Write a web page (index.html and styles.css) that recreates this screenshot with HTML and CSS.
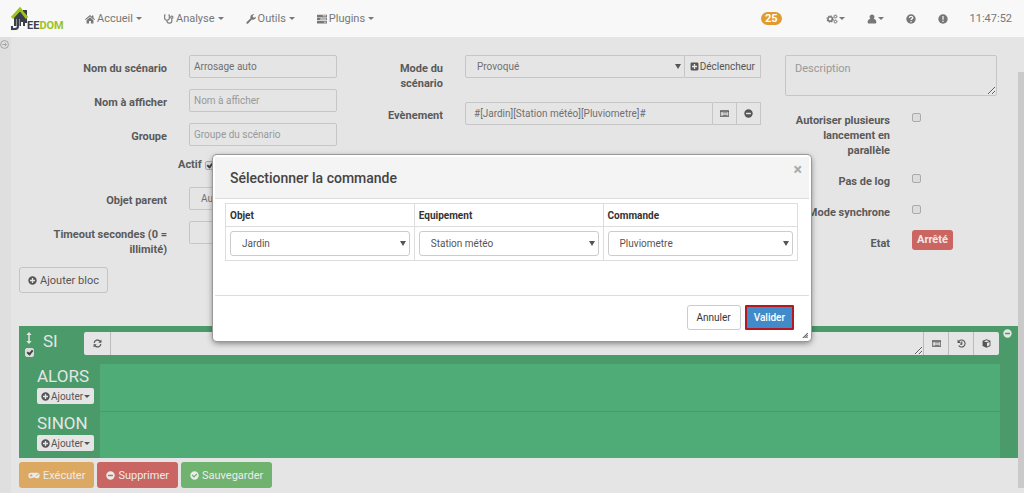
FILE: index.html
```html
<!DOCTYPE html>
<html lang="fr">
<head>
<meta charset="utf-8">
<title>Jeedom - Scénario</title>
<link rel="stylesheet" href="styles.css">
</head>
<body>
<svg class="sprite" aria-hidden="true">
  <symbol id="home" viewBox="0 0 16 16"><path d="M8 1.5 0 8.4l1.2 1.3L8 4l6.800 5.700L16 8.400l-2.500-2.200V2.200h-2.300v2zM8 5.200 2.500 9.800V15h4v-4h3v4h4V9.800z"/></symbol>
  <symbol id="steth" viewBox="0 0 16 16"><path d="M2.500 1.500H1V6c0 2.500 1.500 4 3.700 4S8.500 8.500 8.500 6V1.500H7M4.800 10v1.500c0 4 7.700 4 7.700 0V7" fill="none" stroke="currentColor" stroke-width="1.800"/><circle cx="12.500" cy="5" r="1.800" fill="none" stroke="currentColor" stroke-width="1.800"/></symbol>
  <symbol id="wrench" viewBox="0 0 16 16"><path d="M15.600 4.200 13 5.800 10.800 4.600V2.200L13.300.7C10.500-.6 7 1.500 7 5c0 .6.1 1.200.3 1.700L.8 13.200c-1 1.200 1 3.200 2.200 2.200l6.400-6.500c3.500 1.300 7-1.500 6.200-4.700z"/></symbol>
  <symbol id="tasks" viewBox="0 0 16 16"><path fill-rule="evenodd" d="M0 1h16v4H0zm9 1.300v1.400h5.700V2.300zM0 6h16v4H0zm5 1.300v1.400h9.700V7.300zM0 11h16v4H0zm11 1.300v1.400h3.700v-1.400z"/></symbol>
  <symbol id="gears" viewBox="0 0 18 16"><g fill="none" stroke="currentColor"><circle cx="6" cy="8" r="3.500" stroke-width="2.400"/><circle cx="6" cy="8" r="5" stroke-width="1.800" stroke-dasharray="2 1.930"/><circle cx="14.500" cy="4" r="1.900" stroke-width="1.500"/><circle cx="14.500" cy="4" r="2.900" stroke-width="1" stroke-dasharray="1.200 1.080"/><circle cx="14.500" cy="12" r="1.900" stroke-width="1.500"/><circle cx="14.500" cy="12" r="2.900" stroke-width="1" stroke-dasharray="1.200 1.080"/></g></symbol>
  <symbol id="user" viewBox="0 0 16 16"><path d="M8 0.800a3.800 3.800 0 0 1 2.600 6.700C13.500 8 15 10.500 15 13c0 1.300-.8 2.200-2 2.200H3c-1.200 0-2-.9-2-2.200 0-2.500 1.500-5 4.400-5.500A3.800 3.800 0 0 1 8 .8z"/></symbol>
  <symbol id="question" viewBox="0 0 16 16"><circle cx="8" cy="8" r="7.500"/><path class="cut" d="M5.300 6.200c.3-3.400 5.500-3.200 5.500-.3 0 1.900-2.700 1.900-2.700 3.800M8.100 11v2"/></symbol>
  <symbol id="exclaim" viewBox="0 0 16 16"><circle cx="8" cy="8" r="7.500"/><path class="cut" d="M8 3v6.200M8 10.700v2.200"/></symbol>
  <symbol id="plus-circle" viewBox="0 0 16 16"><path fill-rule="evenodd" d="M8 .5a7.500 7.500 0 1 0 0 15 7.500 7.500 0 0 0 0-15zM6.800 3.500h2.400v3.300h3.300v2.400H9.200v3.300H6.800V9.200H3.500V6.800h3.300z"/></symbol>
  <symbol id="plus-square" viewBox="0 0 16 16"><path fill-rule="evenodd" d="M3 1h10a2 2 0 0 1 2 2v10a2 2 0 0 1-2 2H3a2 2 0 0 1-2-2V3a2 2 0 0 1 2-2zm3.800 2.500v3.300H3.500v2.400h3.300v3.300h2.400V9.200h3.300V6.800H9.200V3.500z"/></symbol>
  <symbol id="minus-circle" viewBox="0 0 16 16"><path fill-rule="evenodd" d="M8 .5a7.500 7.500 0 1 0 0 15 7.500 7.500 0 0 0 0-15zM3.700 6.700h8.600v2.600H3.700z"/></symbol>
  <symbol id="check-circle" viewBox="0 0 16 16"><path fill-rule="evenodd" d="M8 .5a7.500 7.500 0 1 0 0 15 7.500 7.500 0 0 0 0-15zM7 12 3 8l1.600-1.600L7 8.800l4.400-4.400L13 6z"/></symbol>
  <symbol id="list" viewBox="0 0 16 16"><path fill-rule="evenodd" d="M1 2h14a1 1 0 0 1 1 1v10a1 1 0 0 1-1 1H1a1 1 0 0 1-1-1V3a1 1 0 0 1 1-1zm.2 2.800v8h13.600v-8zM2.500 6h1.200v1.200H2.500zm2.300 0h8.700v1.200H4.800zM2.500 8.300h1.200v1.200H2.500zm2.300 0h8.700v1.200H4.800zm-2.300 2.300h1.200v1.200H2.500zm2.300 0h8.700v1.200H4.800z"/></symbol>
  <symbol id="refresh" viewBox="0 0 16 16"><path d="M2 7a6 6 0 0 1 10.500-3M14 9a6 6 0 0 1-10.500 3" fill="none" stroke="currentColor" stroke-width="2.200"/><path d="M15 1v5.500H9.500zM1 15V9.500h5.500z"/></symbol>
  <symbol id="history" viewBox="0 0 16 16"><path d="M3.500 4a6.200 6.200 0 1 1-.5 7.500M8.500 4.500V9H5.500" fill="none" stroke="currentColor" stroke-width="2"/><path d="M1 1v6h6z"/></symbol>
  <symbol id="cube" viewBox="0 0 16 16"><path fill-rule="evenodd" d="M8 .5 15 3.300v9L8 15.500l-7-3.200v-9zm0 1.600L3.300 4 8 5.900 12.700 4zM8.800 7.300v6.200l4.700-2.200v-6z"/></symbol>
  <symbol id="gamepad" viewBox="0 0 20 16"><path fill-rule="evenodd" d="M5 3h10a5 5 0 0 1 0 10c-1.600 0-2.600-.7-3.400-1.500H8.400C7.600 12.300 6.600 13 5 13A5 5 0 0 1 5 3zm-.8 2.500v1.700H2.500v1.600h1.700v1.700h1.600V8.800h1.700V7.200H5.800V5.500zM13 7.500v2h2v-2zm2.500-2v2h2v-2z"/></symbol>
  <symbol id="updown" viewBox="0 0 8 16"><path d="M4 0l3.500 4H5v8h2.500L4 16 .5 12H3V4H.5z"/></symbol>
  <symbol id="arrow-circle" viewBox="0 0 16 16"><g fill="none" stroke="currentColor" stroke-width="1.500"><circle cx="8" cy="8" r="7"/><path d="M4 8h7M8.500 5l3 3-3 3"/></g></symbol>
  <symbol id="grip" viewBox="0 0 8 8"><path d="M1 8 8 1M3.500 8 8 3.500M6 8l2-2" fill="none" stroke="currentColor" stroke-width="1.300"/></symbol>
</svg>

<header class="navbar">
  <a class="brand" href="#" aria-label="Jeedom">
    <svg width="56" height="26" viewBox="0 0 56 26">
      <path d="M4 11 10 5l3 3V5l4-1v13h-2v3H4z" fill="#3b3d4a"/>
      <path d="M2 12 10 3l7 9" fill="none" stroke="#9cc31c" stroke-width="3"/>
      <path d="M13 4h4v5l-4-4z" fill="#3b3d4a"/>
      <path d="M8 13v7q0 3-3 3H2v-3" fill="none" stroke="#e8e8ea" stroke-width="3"/>
      <path d="M8 13v7q0 3-3 3H2v-3M8 10v2" fill="none" stroke="#3b3d4a" stroke-width="2"/>
      <path d="M11 16h2v4h-2z" fill="#f8f8f8"/>
      <text class="brand-text" x="17" y="23">EE<tspan fill="#9cc31c">DOM</tspan></text>
    </svg>
  </a>
  <nav class="menu">
    <a href="#"><svg class="icon"><use href="#home"/></svg>Accueil<i class="caret"></i></a>
    <a href="#"><svg class="icon"><use href="#steth"/></svg>Analyse<i class="caret"></i></a>
    <a href="#"><svg class="icon"><use href="#wrench"/></svg>Outils<i class="caret"></i></a>
    <a href="#"><svg class="icon"><use href="#tasks"/></svg>Plugins<i class="caret"></i></a>
  </nav>
  <a class="count" href="#">25</a>
  <nav class="tools">
    <a href="#" aria-label="Configuration"><svg class="icon wide"><use href="#gears"/></svg><i class="caret"></i></a>
    <a href="#" aria-label="Utilisateur"><svg class="icon"><use href="#user"/></svg><i class="caret"></i></a>
    <a href="#" aria-label="Aide"><svg class="icon"><use href="#question"/></svg></a>
    <a href="#" aria-label="Alertes"><svg class="icon"><use href="#exclaim"/></svg></a>
    <time>11:47:52</time>
  </nav>
</header>

<div class="page">
  <aside class="strip"><svg class="icon"><use href="#arrow-circle"/></svg></aside>
  <main class="content">
    <form class="form">
      <div class="col col-a">
        <div class="row"><label for="name">Nom du scénario</label><input class="field" id="name" type="text" value="Arrosage auto"></div>
        <div class="row"><label for="display">Nom à afficher</label><input class="field" id="display" type="text" placeholder="Nom à afficher"></div>
        <div class="row"><label for="group">Groupe</label><input class="field" id="group" type="text" placeholder="Groupe du scénario"></div>
        <div class="active"><label for="active">Actif</label><input class="check" id="active" type="checkbox" checked></div>
        <div class="row"><label for="parent">Objet parent</label><span class="pick"><select class="field" id="parent"><option>Aucun</option></select></span></div>
        <div class="row"><label for="timeout">Timeout secondes (0 = illimité)</label><input class="field" id="timeout" type="text"></div>
      </div>
      <div class="col col-b">
        <div class="row"><label for="mode">Mode du scénario</label>
          <div class="group"><span class="pick"><select class="field" id="mode"><option>Provoqué</option></select></span><button class="addon text" type="button"><svg class="icon"><use href="#plus-square"/></svg>Déclencheur</button></div>
        </div>
        <div class="row"><label for="event">Evènement</label>
          <div class="group"><input class="field" id="event" type="text" value="#[Jardin][Station météo][Pluviometre]#"><button class="addon" type="button" aria-label="Choisir"><svg class="icon"><use href="#list"/></svg></button><button class="addon" type="button" aria-label="Retirer"><svg class="icon"><use href="#minus-circle"/></svg></button></div>
        </div>
      </div>
      <div class="col col-c">
        <textarea class="field description" placeholder="Description" aria-label="Description"></textarea>
        <div class="row"><label for="multi">Autoriser plusieurs lancement en parallèle</label><input class="check" id="multi" type="checkbox"></div>
        <div class="row"><label for="nolog">Pas de log</label><input class="check" id="nolog" type="checkbox"></div>
        <div class="row"><label for="sync">Mode synchrone</label><input class="check" id="sync" type="checkbox"></div>
        <div class="row"><span class="label">Etat</span><span class="state">Arrêté</span></div>
      </div>
    </form>

    <button class="btn outline" type="button"><svg class="icon"><use href="#plus-circle"/></svg>Ajouter bloc</button>

    <section class="block">
      <div class="block-head">
        <div class="handle"><svg class="move"><use href="#updown"/></svg><input class="check" type="checkbox" checked aria-label="Activer le bloc"></div>
        <h2>SI</h2>
        <div class="group expr">
          <button class="addon" type="button" aria-label="Rafraîchir"><svg class="icon"><use href="#refresh"/></svg></button><textarea class="field" rows="1" aria-label="Condition"></textarea><button class="addon" type="button" aria-label="Commande"><svg class="icon"><use href="#list"/></svg></button><button class="addon" type="button" aria-label="Historique"><svg class="icon"><use href="#history"/></svg></button><button class="addon" type="button" aria-label="Equipement"><svg class="icon"><use href="#cube"/></svg></button>
        </div>
        <button class="remove" type="button" aria-label="Supprimer le bloc"><svg class="icon"><use href="#minus-circle"/></svg></button>
      </div>
      <div class="branch"><div class="branch-name"><h2>ALORS</h2><button class="mini" type="button"><svg class="icon"><use href="#plus-circle"/></svg>Ajouter<i class="caret"></i></button></div><div class="zone"></div></div>
      <div class="branch"><div class="branch-name"><h2>SINON</h2><button class="mini" type="button"><svg class="icon"><use href="#plus-circle"/></svg>Ajouter<i class="caret"></i></button></div><div class="zone"></div></div>
    </section>

    <div class="actions">
      <button class="btn run" type="button"><svg class="icon wide"><use href="#gamepad"/></svg>Exécuter</button>
      <button class="btn delete" type="button"><svg class="icon"><use href="#minus-circle"/></svg>Supprimer</button>
      <button class="btn save" type="button"><svg class="icon"><use href="#check-circle"/></svg>Sauvegarder</button>
    </div>
  </main>
  <div class="scroll"></div>
</div>

<div class="overlay">
  <div class="dialog" role="dialog" aria-labelledby="title">
    <div class="dialog-head"><h1 id="title">Sélectionner la commande</h1><button class="close" type="button" aria-label="Fermer">×</button></div>
    <div class="dialog-body">
      <table class="table">
        <thead><tr><th id="h1">Objet</th><th id="h2">Equipement</th><th id="h3" class="last">Commande</th></tr></thead>
        <tbody><tr>
          <td><span class="pick"><select class="field" aria-labelledby="h1"><option>Jardin</option></select></span></td>
          <td><span class="pick"><select class="field" aria-labelledby="h2"><option>Station météo</option></select></span></td>
          <td><span class="pick"><select class="field" aria-labelledby="h3"><option>Pluviometre</option></select></span></td>
        </tr></tbody>
      </table>
    </div>
    <div class="dialog-foot"><button class="btn cancel" type="button">Annuler</button><button class="btn confirm" type="button">Valider</button></div>
    <svg class="grip"><use href="#grip"/></svg>
  </div>
</div>
</body>
</html>
```
FILE: styles.css
```css
*, *::after { box-sizing: border-box; }
body { margin: 0; min-height: 100vh; display: flex; flex-direction: column; background: #e5e5e5; color: #555; font: 10px/15px Roboto, sans-serif; }
button, input, select, textarea { font: inherit; color: inherit; margin: 0; }
button { display: inline-flex; align-items: center; justify-content: center; gap: 3px; cursor: pointer; white-space: nowrap; }
h1, h2 { margin: 0; }
a { color: inherit; text-decoration: none; }
.sprite { position: absolute; width: 0; height: 0; }
.icon { width: 9px; height: 9px; flex: none; fill: currentColor; }
.icon.wide { width: 12px; }
.cut { fill: none; stroke: #f8f8f8; stroke-width: 2; }
.caret { border: 3px solid transparent; border-top-color: currentColor; border-bottom: 0; margin-left: 1px; }

.navbar { display: flex; align-items: center; height: 37px; padding: 0 12px 0 10px; background: #f8f8f8; color: #777; font-size: 11px; }
.navbar a { display: flex; align-items: center; gap: 3px; }
.navbar .icon { width: 10px; height: 10px; }
.navbar .icon.wide { width: 12px; }
.brand-text { font: bold 11px Roboto, sans-serif; fill: #3b3d4a; }
.menu { display: flex; gap: 22px; margin-left: 19px; flex: 1; }
.menu a { gap: 2px; }
.navbar .count { padding: 0 4px; height: 13px; border-radius: 7px; background: #e39a2c; color: #fff; font-weight: 700; margin-right: 44px; }
.tools { display: flex; align-items: center; gap: 22px; }
.tools a { gap: 0; }

.page { display: flex; flex: 1; position: relative; }
.strip { width: 11px; background: #dfdfdf; color: #999; }
.strip .icon { display: block; margin-top: 3px; }
.content { flex: 1; min-width: 0; padding: 18px 6px 5px 8px; }
.scroll { position: absolute; top: 35px; right: 0; bottom: 5px; width: 6px; background: #cacaca; }

.form { display: grid; grid-template-columns: 318fr 400fr 212fr; column-gap: 24px; padding-right: 21px; }
.col { display: flex; flex-direction: column; gap: 11px; }
.row { display: grid; column-gap: 22px; align-items: start; }
.col-a .row { grid-template-columns: 148fr 148fr; }
.col-b .row { grid-template-columns: 82fr 296fr; }
.col-c { gap: 10px; }
.col-c .row { grid-template-columns: 105fr 85fr; }
.col-c .row:nth-child(2) { margin-top: 1px; }
label, .label { font-size: 11px; font-weight: 700; text-align: right; padding-top: 6px; color: #5a5a5a; }
.active { display: flex; align-items: flex-start; gap: 3px; padding-left: 50%; height: 19px; }
.active label { padding: 0; }

.field { display: block; width: 100%; min-width: 0; height: 23px; padding: 0 4px; border: 1px solid #c6c6c6; border-radius: 2px; background: transparent; color: #707070; outline: 0; }
.field::placeholder { color: #999; }
select.field { appearance: none; padding: 0 11px; }
.pick { display: block; position: relative; flex: 1; }
.pick::after { content: ""; position: absolute; right: 4px; top: 50%; margin-top: -3px; border: 3px solid transparent; border-top: 5px solid #555; border-bottom: 0; pointer-events: none; }
.description { height: 41px; padding: 5px 9px; font-size: 11px; }
.group { display: flex; }
.group .field { border-radius: 2px 0 0 2px; }
.group input.field { padding: 0 8px; }
.addon { height: 23px; padding: 0 7px; border: 1px solid #c6c6c6; border-left: 0; background: transparent; color: #555; }
.addon.text { padding: 0 5px; gap: 1px; }
.check { appearance: none; width: 9px; height: 9px; margin: 6px 0 0; border: 1px solid #aaa; border-radius: 2px; background: #dcdcdc; position: relative; }
.active .check { margin: 4px 0 0; }
.check:checked::after { content: ""; position: absolute; left: 2px; top: 0; width: 4px; height: 6px; border: solid #444; border-width: 0 2px 2px 0; transform: rotate(40deg); }
.state { justify-self: start; padding: 0 5px; line-height: 20px; border-radius: 3px; background: #cb6561; color: #f0e8e8; font-size: 11px; font-weight: 700; }

.btn { height: 26px; padding: 0 8px; border: 1px solid transparent; border-radius: 3px; background: none; font-size: 11px; color: #ececec; }
.btn.outline { margin-top: 10px; border-color: #c4c4c4; color: #555; }
.block { margin-top: 33px; background: #4b9a6a; color: #e5e5e5; }
.block h2 { font-size: 17px; line-height: 18px; font-weight: 400; }
.block-head { display: flex; align-items: flex-start; height: 38px; padding: 6px 6px 0; }
.handle { width: 18px; display: flex; flex-direction: column; gap: 4px; }
.handle .check { margin: 0; border-color: #ddd; }
.move { width: 6px; height: 12px; margin-left: 1px; fill: #e5e5e5; }
.block-head h2 { width: 41px; }
.expr { flex: 1; }
.expr .addon, .expr .field { background: #e5e5e5; border: 0; border-right: 1px solid #bbb; border-radius: 0; }
.expr .field { flex: 1; }
.expr .addon:first-child { width: 27px; border-radius: 2px 0 0 2px; }
.expr .addon:last-child { border-right: 0; border-radius: 0 2px 2px 0; }
.expr .addon:not(:first-child) { width: 25px; }
.remove { padding: 0; margin: -3px 0 0 4px; border: 0; background: none; color: #e5e5e5; }
.branch { display: flex; }
.branch-name { width: 81px; height: 47px; padding: 3px 0 0 18px; }
.zone { flex: 1; background: #4fac77; margin-right: 18px; }
.branch + .branch .zone { border-top: 1px solid #469b69; }
.mini { height: 16px; padding: 0 4px; border: 0; border-radius: 2px; background: #e5e5e5; color: #555; margin-top: 3px; gap: 1px; }
.mini .caret { margin-left: 0; }
.actions { display: flex; gap: 3px; margin-top: 4px; }
.run { background: #dca963; }
.delete { background: #c96562; }
.save { background: #6fb36f; }

.overlay { position: absolute; top: 155px; left: 0; right: 0; }
.dialog { position: relative; max-width: 598px; margin: 0 auto; padding: 2px; background: #fff; border-radius: 4px; box-shadow: 0 0 0 1px #999, 0 2px 6px rgba(0, 0, 0, .5); color: #333; }
.dialog-head { display: flex; justify-content: space-between; align-items: flex-start; height: 42px; padding: 0 7px 0 15px; background: #f4f4f4; border-bottom: 1px solid #ddd; }
.dialog-head h1 { font-size: 14px; line-height: 42px; font-weight: 500; color: #444; }
.close { padding: 0; border: 0; background: none; color: #aaa; font-size: 16px; line-height: 26px; font-weight: 700; }
.dialog-body { padding: 4px 11px 0 10px; height: 97px; border-bottom: 1px solid #ddd; }
.table { width: 100%; border-collapse: collapse; table-layout: fixed; }
.table th { text-align: left; height: 23px; padding: 0 4px; border: 1px solid #ddd; font-weight: 700; }
.table .last { width: 34%; }
.table td { padding: 4px; border: 1px solid #ddd; }
.table .field { height: 25px; border-color: #ccc; border-radius: 3px; color: #555; }
.dialog-foot { display: flex; justify-content: flex-end; gap: 4px; padding: 9px 15px 9px 0; }
.dialog-foot .btn { height: 25px; padding: 0 9px; font-size: 10px; }
.cancel { border-color: #ccc; color: #333; }
.dialog-foot .confirm { border: 2px solid #b5191f; border-radius: 1px; background: #428bca; color: #fff; font-weight: 500; padding: 0 7px; }
.grip { position: absolute; right: 3px; bottom: 3px; width: 6px; height: 6px; color: #333; }
```
